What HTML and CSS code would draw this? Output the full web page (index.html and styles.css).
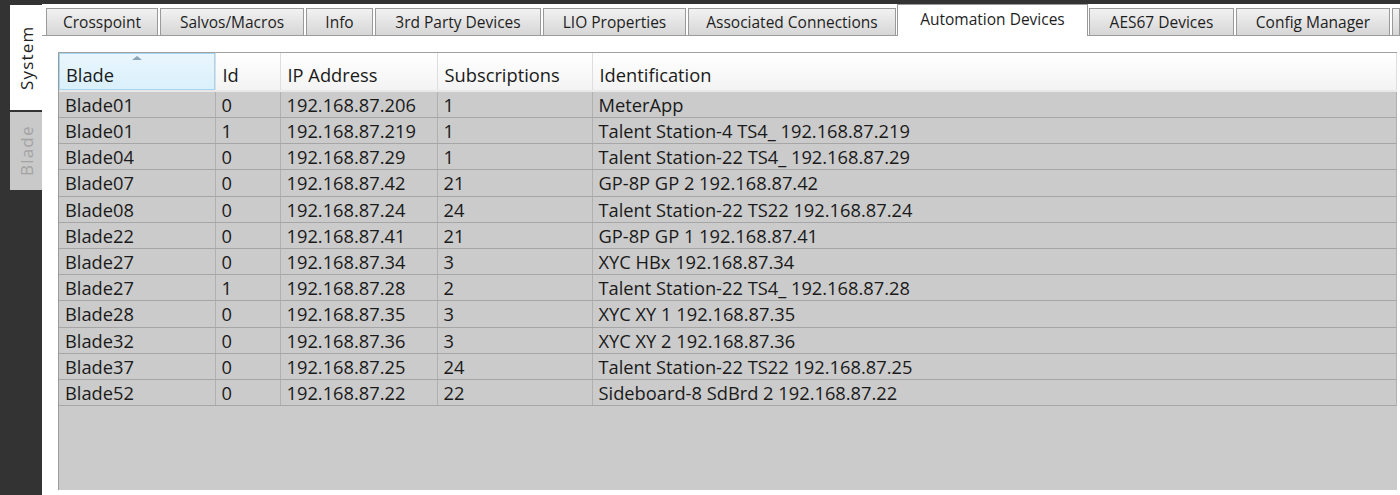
FILE: index.html
```html
<!DOCTYPE html>
<html>
    <head>
        <title>Automation Devices</title>
        <link rel="stylesheet" href="styles.css">
    </head>
    <body>
        <div class="side">
            <div class="vtab vtab-active">System</div>
            <div class="vtab vtab-off">Blade</div>
        </div>
        <div class="main">
            <div class="tabs">
                <div class="tab">Crosspoint</div>
                <div class="tab">Salvos/Macros</div>
                <div class="tab">Info</div>
                <div class="tab">3rd Party Devices</div>
                <div class="tab">LIO Properties</div>
                <div class="tab">Associated Connections</div>
                <div class="tab tab-active">Automation Devices</div>
                <div class="tab">AES67 Devices</div>
                <div class="tab">Config Manager</div>
                <div class="tab"></div>
            </div>
            <div class="grid-wrap">
                <table class="grid">
                    <colgroup>
                        <col class="c-blade">
                        <col class="c-id">
                        <col class="c-ip">
                        <col class="c-subs">
                        <col>
                    </colgroup>
                    <thead>
                        <tr>
                            <th class="sorted"><span class="sort-arrow"></span>Blade</th>
                            <th>Id</th>
                            <th>IP Address</th>
                            <th>Subscriptions</th>
                            <th>Identification</th>
                        </tr>
                    </thead>
                    <tbody>
                        <tr><td>Blade01</td><td>0</td><td>192.168.87.206</td><td>1</td><td>MeterApp</td></tr>
                        <tr><td>Blade01</td><td>1</td><td>192.168.87.219</td><td>1</td><td>Talent Station-4 TS4_ 192.168.87.219</td></tr>
                        <tr><td>Blade04</td><td>0</td><td>192.168.87.29</td><td>1</td><td>Talent Station-22 TS4_ 192.168.87.29</td></tr>
                        <tr><td>Blade07</td><td>0</td><td>192.168.87.42</td><td>21</td><td>GP-8P GP 2 192.168.87.42</td></tr>
                        <tr><td>Blade08</td><td>0</td><td>192.168.87.24</td><td>24</td><td>Talent Station-22 TS22 192.168.87.24</td></tr>
                        <tr><td>Blade22</td><td>0</td><td>192.168.87.41</td><td>21</td><td>GP-8P GP 1 192.168.87.41</td></tr>
                        <tr><td>Blade27</td><td>0</td><td>192.168.87.34</td><td>3</td><td>XYC HBx 192.168.87.34</td></tr>
                        <tr><td>Blade27</td><td>1</td><td>192.168.87.28</td><td>2</td><td>Talent Station-22 TS4_ 192.168.87.28</td></tr>
                        <tr><td>Blade28</td><td>0</td><td>192.168.87.35</td><td>3</td><td>XYC XY 1 192.168.87.35</td></tr>
                        <tr><td>Blade32</td><td>0</td><td>192.168.87.36</td><td>3</td><td>XYC XY 2 192.168.87.36</td></tr>
                        <tr><td>Blade37</td><td>0</td><td>192.168.87.25</td><td>24</td><td>Talent Station-22 TS22 192.168.87.25</td></tr>
                        <tr><td>Blade52</td><td>0</td><td>192.168.87.22</td><td>22</td><td>Sideboard-8 SdBrd 2 192.168.87.22</td></tr>
                    </tbody>
                </table>
            </div>
        </div>
    </body>
</html>
```
FILE: styles.css
```css
body {
    margin: 0;
    height: 495px;
    overflow: hidden;
    display: flex;
    background: #333;
    font-family: 'Open Sans', 'Noto Sans', sans-serif;
    color: #1a1a1a;
}

/* left vertical tabs */
.side {
    width: 42px;
    flex: none;
    padding-top: 5px;
    display: flex;
    flex-direction: column;
    align-items: flex-end;
    gap: 2px;
}

.vtab {
    width: 32px;
    box-sizing: border-box;
    writing-mode: vertical-rl;
    transform: rotate(180deg);
    display: flex;
    align-items: center;
    justify-content: center;
    font-size: 17px;
    letter-spacing: 1.2px;
}

.vtab-active {
    height: 105px;
    background: #fff;
    color: #222;
}

.vtab-off {
    height: 78px;
    background: #c9c9c9;
    color: #a3a3a3;
}

/* main panel */
.main {
    flex: 1;
    margin-top: 4px;
    background: #fff;
    display: flex;
    flex-direction: column;
}

.tabs {
    display: grid;
    grid-template-columns: 112px 144px 67px 166px 143px 208px 189px 145px 154px 8px;
    column-gap: 2px;
    align-items: end;
    height: 31px;
    padding-left: 4px;
    border-bottom: 1px solid #9c9c9c;
}

.tab {
    height: 27px;
    box-sizing: border-box;
    border: 1px solid #9a9a9a;
    border-bottom: none;
    background: linear-gradient(#f2f2f2, #d6d6d6);
    font-size: 15.5px;
    display: flex;
    align-items: center;
    justify-content: center;
    color: #1e1e1e;
    white-space: nowrap;
}

.tab-active {
    height: 32px;
    margin: 0 -1px -1px -1px;
    background: #fff;
    padding-bottom: 4px;
}

/* data grid */
.grid-wrap {
    flex: 1;
    margin: 16px 3px 5px 16px;
    background: #cbcbcb;
    border-left: 1px solid #9a9a9a;
    border-top: 1px solid #a0a0a0;
}

.grid {
    width: 100%;
    border-collapse: collapse;
    table-layout: fixed;
    font-size: 18.3px;
}

.c-blade { width: 156px; }
.c-id { width: 65px; }
.c-ip { width: 157px; }
.c-subs { width: 155px; }

.grid th {
    position: relative;
    height: 38px;
    padding: 5px 0 0 7px;
    box-sizing: border-box;
    text-align: left;
    font-weight: normal;
    font-size: 18.3px;
    background: linear-gradient(#fff, #f3f3f3);
    border-right: 1px solid #dedede;
    border-bottom: 2px solid #e8e8e8;
}

.grid th.sorted {
    background: linear-gradient(#eaf6fd, #d9f0fc);
    box-shadow: inset 0 0 0 1px #a5d5ef;
}

.sort-arrow {
    position: absolute;
    top: 3px;
    left: 50%;
    margin-left: -5px;
    border-left: 5px solid transparent;
    border-right: 5px solid transparent;
    border-bottom: 4px solid #8aa4b8;
}

.grid td {
    height: 26.2px;
    padding: 0 0 0 6px;
    box-sizing: border-box;
    border-right: 1px solid #b0b0b0;
    border-bottom: 1px solid #a6a6a6;
    white-space: nowrap;
    overflow: hidden;
}
```
